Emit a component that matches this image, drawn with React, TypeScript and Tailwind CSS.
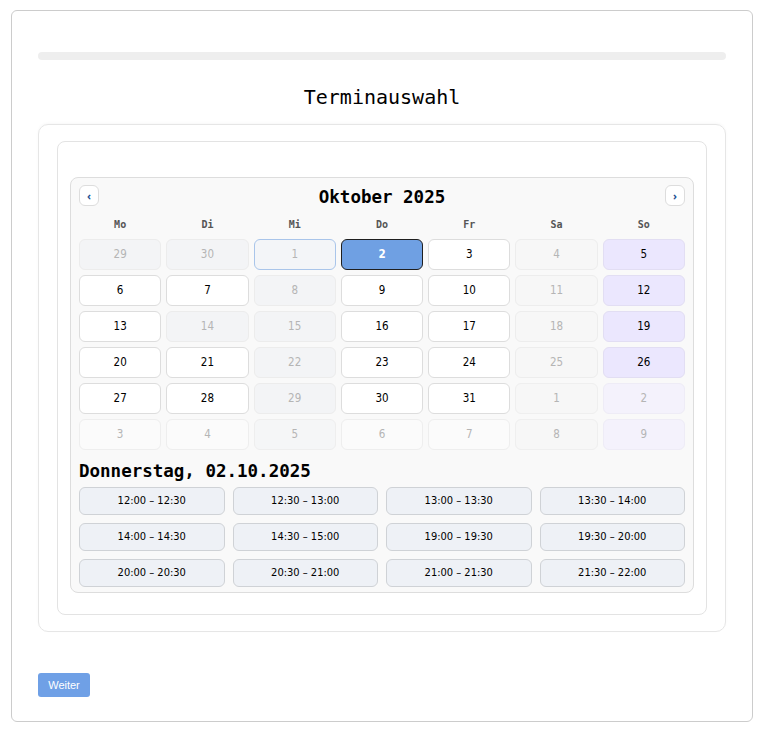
import React from "react";

type Kind = "avail" | "dis" | "today" | "sel" | "sat" | "sun";
type Cell = { d: number; k: Kind; other?: boolean };

const rows: Cell[][] = [
  [
    { d: 29, k: "dis" },
    { d: 30, k: "dis" },
    { d: 1, k: "today" },
    { d: 2, k: "sel" },
    { d: 3, k: "avail" },
    { d: 4, k: "sat" },
    { d: 5, k: "sun" },
  ],
  [
    { d: 6, k: "avail" },
    { d: 7, k: "avail" },
    { d: 8, k: "dis" },
    { d: 9, k: "avail" },
    { d: 10, k: "avail" },
    { d: 11, k: "sat" },
    { d: 12, k: "sun" },
  ],
  [
    { d: 13, k: "avail" },
    { d: 14, k: "dis" },
    { d: 15, k: "dis" },
    { d: 16, k: "avail" },
    { d: 17, k: "avail" },
    { d: 18, k: "sat" },
    { d: 19, k: "sun" },
  ],
  [
    { d: 20, k: "avail" },
    { d: 21, k: "avail" },
    { d: 22, k: "dis" },
    { d: 23, k: "avail" },
    { d: 24, k: "avail" },
    { d: 25, k: "sat" },
    { d: 26, k: "sun" },
  ],
  [
    { d: 27, k: "avail" },
    { d: 28, k: "avail" },
    { d: 29, k: "dis" },
    { d: 30, k: "avail" },
    { d: 31, k: "avail" },
    { d: 1, k: "sat", other: true },
    { d: 2, k: "sun", other: true },
  ],
  [
    { d: 3, k: "avail", other: true },
    { d: 4, k: "avail", other: true },
    { d: 5, k: "dis", other: true },
    { d: 6, k: "avail", other: true },
    { d: 7, k: "avail", other: true },
    { d: 8, k: "sat", other: true },
    { d: 9, k: "sun", other: true },
  ],
];

function cellClass(c: Cell): string {
  if (c.other) {
    switch (c.k) {
      case "sun":
        return "bg-[#f4f2fc] border-[#eeecf6] text-[#b5b5b5]";
      case "sat":
        return "bg-[#f7f7f7] border-[#efefef] text-[#b5b5b5]";
      case "dis":
        return "bg-[#f5f6f7] border-[#eeeeee] text-[#b5b5b5]";
      default:
        return "bg-[#fbfbfb] border-[#eeeeee] text-[#b5b5b5]";
    }
  }
  switch (c.k) {
    case "avail":
      return "bg-white border-[#dddddd] text-black";
    case "dis":
      return "bg-[#f3f4f6] border-[#ececec] text-[#b5b5b5]";
    case "today":
      return "bg-[#f3f5f8] border-[#a9c5ea] text-[#b5b5b5]";
    case "sel":
      return "bg-[#6fa0e3] border-[#1f1f1f] text-white font-bold";
    case "sat":
      return "bg-[#f7f7f7] border-[#ededed] text-[#b5b5b5]";
    case "sun":
      return "bg-[#ebe7fe] border-[#e2def3] text-black";
  }
}

const days = ["Mo", "Di", "Mi", "Do", "Fr", "Sa", "So"];
const slots = [
  "12:00 – 12:30",
  "12:30 – 13:00",
  "13:00 – 13:30",
  "13:30 – 14:00",
  "14:00 – 14:30",
  "14:30 – 15:00",
  "19:00 – 19:30",
  "19:30 – 20:00",
  "20:00 – 20:30",
  "20:30 – 21:00",
  "21:00 – 21:30",
  "21:30 – 22:00",
];

const mono = "font-['DejaVu_Sans_Mono',monospace]";
const cond = "font-['DejaVu_Sans_Condensed','DejaVu_Sans',sans-serif]";

export default function App() {
  return (
    <div className="min-h-screen bg-white pt-[10px] pl-[11px]">
      <div className="w-[742px] h-[712px] border border-[#cccccc] rounded-[6px] px-[26px] pt-[41px] pb-[24px] flex flex-col">
        <div className="h-[8px] rounded-full bg-[#eeeeee]" />
        <h1 className={`${mono} mt-[25px] text-center text-[20px] leading-[24px] text-black`}>
          Terminauswahl
        </h1>
        <div className="mt-[15px] border border-[#e6e6e6] rounded-[10px] px-[18px] py-[16px] shadow-[0_-1px_3px_rgba(0,0,0,0.03)]">
          <div className="border border-[#e3e3e3] rounded-[8px] px-[12px] pt-[35px] pb-[21px]">
            <div className="border border-[#dddddd] bg-[#f9f9f9] rounded-[8px] px-[8px] pt-[7px] pb-[5px]">
              <div className="flex items-center justify-between h-[21px]">
                <button className="w-[20px] h-[21px] bg-white border border-[#dddddd] rounded-[6px] flex items-center justify-center text-[11px] leading-none text-[#1d4f91] font-bold">
                  ‹
                </button>
                <div className={`${mono} font-bold text-[17.5px] leading-[21px] pt-[3px] text-black`}>
                  Oktober 2025
                </div>
                <button className="w-[20px] h-[21px] bg-white border border-[#dddddd] rounded-[6px] flex items-center justify-center text-[11px] leading-none text-[#1d4f91] font-bold">
                  ›
                </button>
              </div>
              <div className="mt-[12px] grid grid-cols-7 gap-x-[5px] h-[14px]">
                {days.map((d) => (
                  <div
                    key={d}
                    className={`${mono} font-bold text-[10px] leading-[14px] text-center text-[#555555]`}
                  >
                    {d}
                  </div>
                ))}
              </div>
              <div className="mt-[7px] grid grid-cols-7 gap-x-[5px] gap-y-[5px]">
                {rows.flat().map((c, i) => (
                  <div
                    key={i}
                    className={`${cond} h-[31px] border rounded-[6px] flex items-center justify-center text-[11.5px] ${cellClass(c)}`}
                  >
                    {c.d}
                  </div>
                ))}
              </div>
              <div className={`${mono} mt-[11px] font-bold text-[17.5px] leading-[21px] text-black`}>
                Donnerstag, 02.10.2025
              </div>
              <div className="mt-[5px] grid grid-cols-4 gap-[8px]">
                {slots.map((s) => (
                  <button
                    key={s}
                    className={`${cond} h-[28px] bg-[#eef1f6] border border-[#cfd2d6] rounded-[6px] text-[11px] text-black flex items-center justify-center`}
                  >
                    {s}
                  </button>
                ))}
              </div>
            </div>
          </div>
        </div>
        <div className="mt-auto">
          <button className="h-[24px] w-[52px] bg-[#6fa0e6] rounded-[3px] text-white text-[11px] font-['Liberation_Sans',Arial,sans-serif] flex items-center justify-center">
            Weiter
          </button>
        </div>
      </div>
    </div>
  );
}
